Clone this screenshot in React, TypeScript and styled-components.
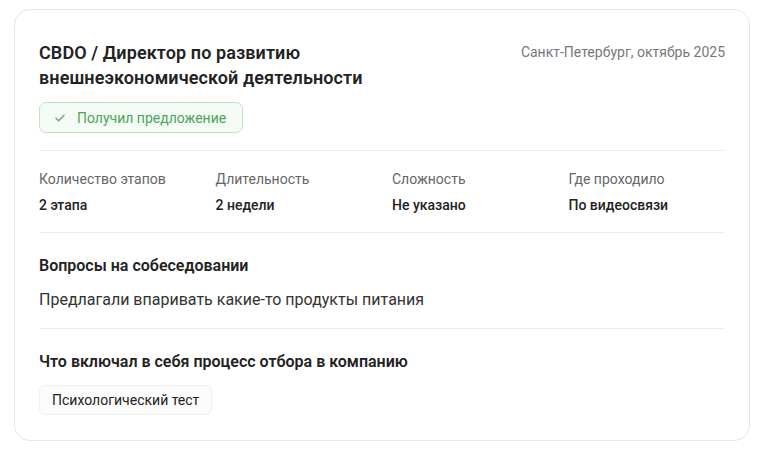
import React from "react";
import styled, { createGlobalStyle } from "styled-components";

const GlobalStyle = createGlobalStyle`
  body {
    margin: 0;
    background: #ffffff;
    font-family: Roboto, "Noto Sans", "Liberation Sans", sans-serif;
    color: #222222;
  }
  * {
    box-sizing: border-box;
  }
`;

const Page = styled.div`
  padding: 9px 14px;
`;

const Card = styled.div`
  width: 736px;
  border: 1px solid #e6e6e6;
  border-radius: 16px;
  padding: 30px 24px 25px;
  background: #fff;
`;

const Header = styled.div`
  display: flex;
  justify-content: space-between;
  align-items: flex-start;
  gap: 24px;
`;

const Title = styled.h2`
  margin: 0;
  font-size: 18px;
  line-height: 25px;
  font-weight: 600;
  letter-spacing: 0.1px;
  color: #222;
  max-width: 360px;
`;

const Location = styled.div`
  font-size: 14px;
  line-height: 20px;
  color: #777;
  white-space: nowrap;
  padding-top: 2px;
`;

const Badge = styled.div`
  display: inline-flex;
  align-items: center;
  gap: 12px;
  margin-top: 12px;
  height: 31px;
  padding: 0 16px 0 15px;
  border: 1px solid #bfe3c6;
  border-radius: 7px;
  background: #f4fbf5;
  color: #4ea35a;
  font-size: 14px;
`;

const Divider = styled.div`
  height: 1px;
  background: #ececec;
`;

const Stats = styled.div`
  display: grid;
  grid-template-columns: repeat(4, 1fr);
  gap: 20px;
  padding: 18px 0 17px;
`;

const Stat = styled.div`
  display: flex;
  flex-direction: column;
  gap: 6px;
`;

const StatLabel = styled.div`
  font-size: 14px;
  line-height: 20px;
  color: #666;
`;

const StatValue = styled.div`
  font-size: 14px;
  line-height: 20px;
  font-weight: 500;
  color: #222;
`;

const Section = styled.div<{ $last?: boolean }>`
  display: flex;
  flex-direction: column;
  gap: 12px;
  padding: 22px 0 ${(p) => (p.$last ? "0" : "17px")};
`;

const SectionTitle = styled.h3`
  margin: 0;
  font-size: 16px;
  line-height: 22px;
  font-weight: 600;
  color: #222;
`;

const SectionText = styled.p`
  margin: 0;
  font-size: 16px;
  line-height: 22px;
  color: #333;
`;

const Tags = styled.div`
  display: flex;
  gap: 8px;
  flex-wrap: wrap;
`;

const Tag = styled.span`
  display: inline-flex;
  align-items: center;
  height: 30px;
  padding: 0 12px;
  border: 1px solid #f1f1f1;
  border-radius: 6px;
  background: #fcfcfc;
  font-size: 14px;
  color: #222;
`;

const stats = [
  { label: "Количество этапов", value: "2 этапа" },
  { label: "Длительность", value: "2 недели" },
  { label: "Сложность", value: "Не указано" },
  { label: "Где проходило", value: "По видеосвязи" },
];

function Check() {
  return (
    <svg width="10" height="8" viewBox="0 0 10 8" fill="none">
      <path
        d="M1 4.2 L3.7 6.8 L9 1.2"
        stroke="#7d9b83"
        strokeWidth="1.4"
        strokeLinecap="round"
        strokeLinejoin="round"
      />
    </svg>
  );
}

export default function App() {
  return (
    <>
      <GlobalStyle />
      <Page>
        <Card>
          <Header>
            <Title>CBDO / Директор по развитию внешнеэкономической деятельности</Title>
            <Location>Санкт-Петербург, октябрь 2025</Location>
          </Header>
          <Badge>
            <Check />
            Получил предложение
          </Badge>
          <Divider style={{ marginTop: 17 }} />
          <Stats>
            {stats.map((s) => (
              <Stat key={s.label}>
                <StatLabel>{s.label}</StatLabel>
                <StatValue>{s.value}</StatValue>
              </Stat>
            ))}
          </Stats>
          <Divider />
          <Section>
            <SectionTitle>Вопросы на собеседовании</SectionTitle>
            <SectionText>Предлагали впаривать какие-то продукты питания</SectionText>
          </Section>
          <Divider />
          <Section $last>
            <SectionTitle>Что включал в себя процесс отбора в компанию</SectionTitle>
            <Tags>
              <Tag>Психологический тест</Tag>
            </Tags>
          </Section>
        </Card>
      </Page>
    </>
  );
}
